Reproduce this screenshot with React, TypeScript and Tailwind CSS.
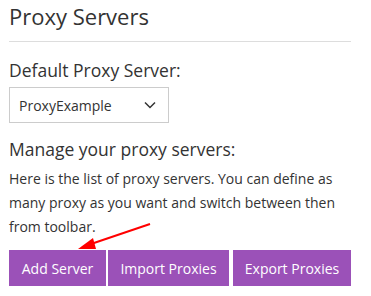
export default function App() {
  return (
    <div
      className="relative w-[371px] h-[296px] bg-white text-[#333] overflow-hidden"
      style={{ fontFamily: '"Open Sans", "Noto Sans", sans-serif' }}
    >
      <div className="pl-[9px] w-[351px]">
        <h1 className="text-[22px] leading-[30px] pt-[1px]">Proxy Servers</h1>
        <hr className="mt-[10px] border-t border-[#ddd]" />

        <h2 className="mt-[16px] text-[17.5px] leading-[24px]">Default Proxy Server:</h2>
        <div className="mt-[5px] flex items-center justify-between w-[160px] h-[36px] border border-[#ccc] pl-[9px] pr-[12px] text-[14px]">
          <span>ProxyExample</span>
          <svg width="12" height="8" viewBox="0 0 12 8" fill="none" stroke="#333" strokeWidth="1.5">
            <path d="M1 1.5 L6 6.5 L11 1.5" />
          </svg>
        </div>

        <h2 className="mt-[14px] text-[17.5px] leading-[24px]">Manage your proxy servers:</h2>
        <p className="mt-[6px] text-[14px] leading-[24px]">
          Here is the list of proxy servers. You can define as many proxy as you want and switch between then from toolbar.
        </p>

        <div className="mt-[11px] flex text-[14px] text-white">
          <button className="w-[97px] h-[36px] bg-[#9b51b8]">Add Server</button>
          <button className="ml-[2px] w-[121px] h-[36px] bg-[#9b51b8]">Import Proxies</button>
          <button className="ml-[4px] w-[118px] h-[36px] bg-[#9b51b8]">Export Proxies</button>
        </div>
      </div>

      {/* annotation arrow */}
      <svg className="absolute left-0 top-0" width="371" height="296" viewBox="0 0 371 296">
        <line x1="150" y1="224" x2="88" y2="245" stroke="#f00" strokeWidth="2" />
        <polygon points="78,249 93,238 96,249" fill="#f00" />
      </svg>
    </div>
  );
}
